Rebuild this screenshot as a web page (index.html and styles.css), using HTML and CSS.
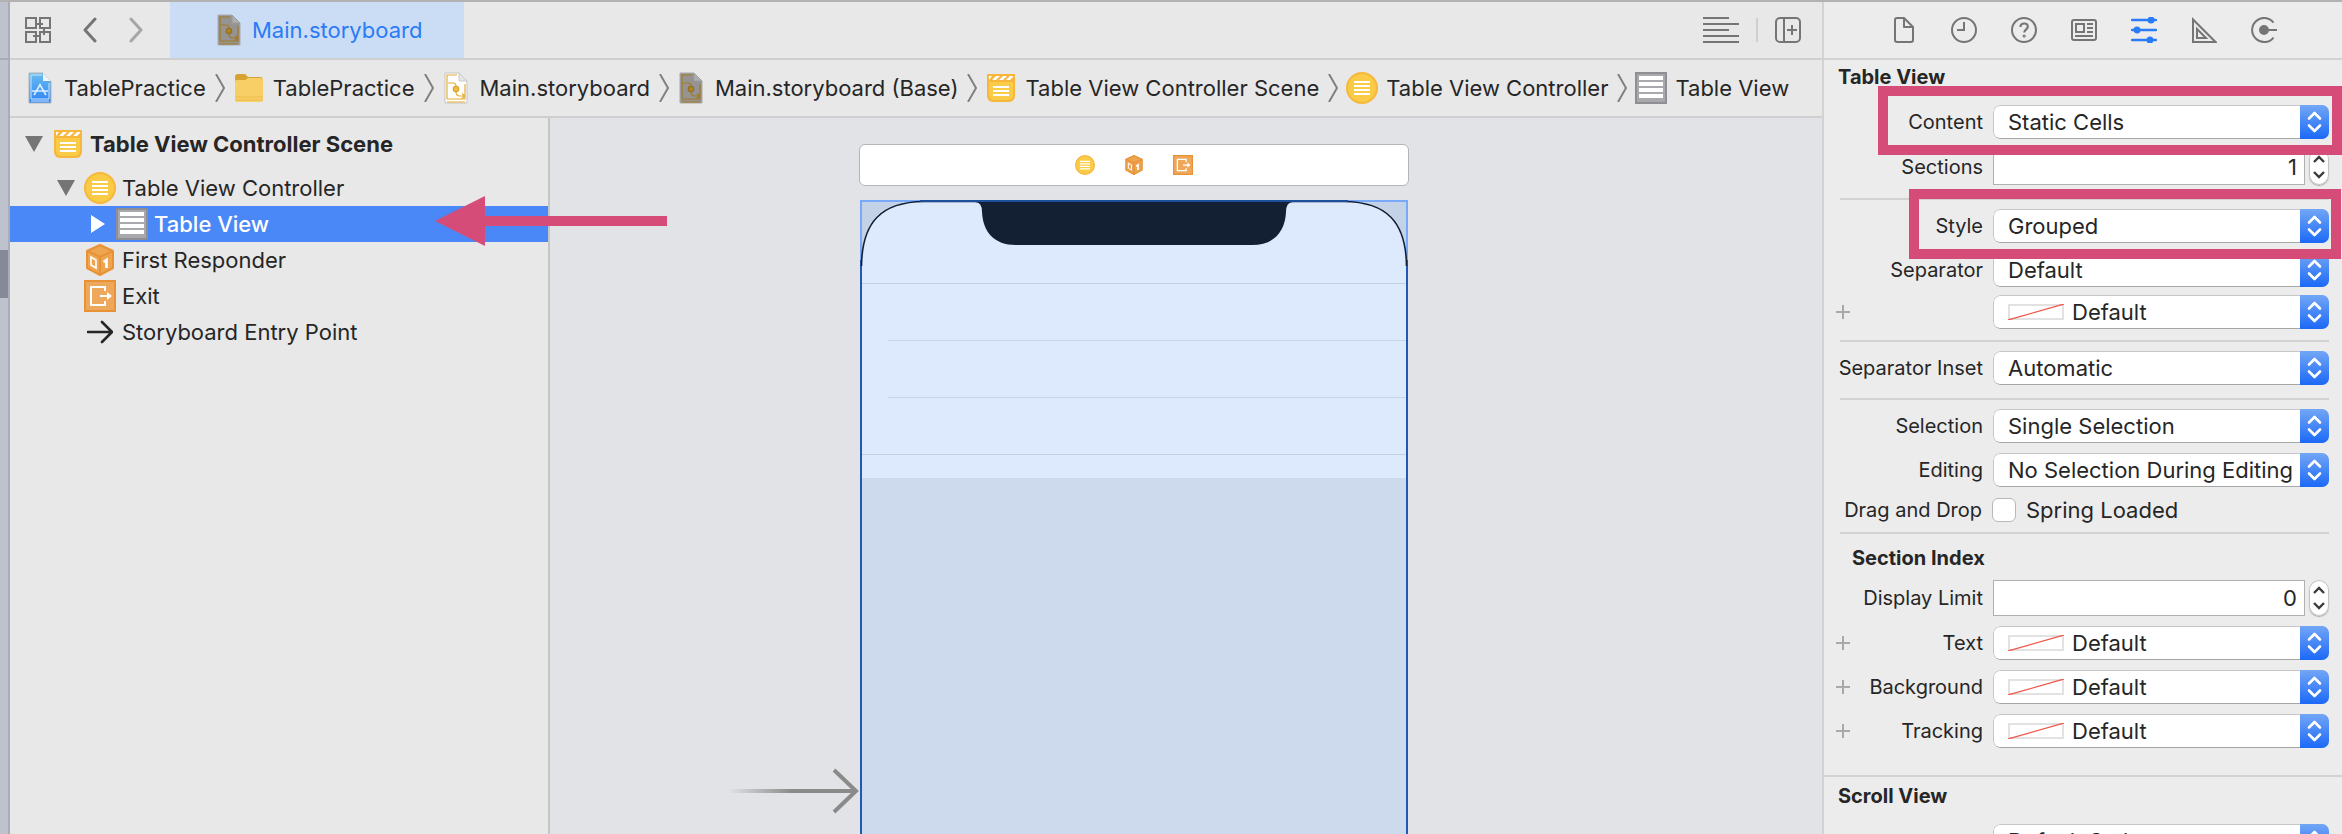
FILE: index.html
```html
<!DOCTYPE html>
<html lang="en">
<head>
<meta charset="utf-8">
<title>Main.storyboard</title>
<link rel="stylesheet" href="styles.css">
</head>
<body>
<svg class="defs" aria-hidden="true">
  <defs>
    <linearGradient id="g-blue" x1="0" y1="0" x2="0" y2="1"><stop offset="0" stop-color="#69bdf0"/><stop offset="1" stop-color="#2f82f3"/></linearGradient>
    <linearGradient id="g-fade" x1="0" y1="0" x2="1" y2="0"><stop offset="0" stop-color="#8a8a8a" stop-opacity="0"/><stop offset=".5" stop-color="#8a8a8a"/></linearGradient>
    <symbol id="i-scene" viewBox="0 0 28 28"><path d="M0 0h28v22a6 6 0 0 1-6 6H6a6 6 0 0 1-6-6z" fill="#f6b73c"/><path d="M2 8h24v13a5 5 0 0 1-5 5H7a5 5 0 0 1-5-5z" fill="#f9cb46"/><path d="M2 2h3L2 6zM9 2h4l-4 4H5zM16 2h4l-4 4h-4zM23 2h3v1l-3 3h-4z" fill="#fff"/><path d="M6 13h16M6 17h16M6 21h16" stroke="#fff" stroke-width="2"/></symbol>
    <symbol id="i-controller" viewBox="0 0 32 32"><circle cx="16" cy="16" r="15" fill="#f9cb46" stroke="#f6b73c" stroke-width="2"/><path d="M8 10h16M8 14h16M8 18h16M8 22h16" stroke="#fff" stroke-width="2"/></symbol>
    <symbol id="i-table" viewBox="0 0 32 32"><path d="M1 1h30v30H1z" fill="#a8a8ad" stroke="#8e8e93" stroke-width="2"/><path d="M4 6h24M4 12h24M4 18h24M4 24h24" stroke="#fff" stroke-width="4"/></symbol>
    <symbol id="i-cube" viewBox="0 0 28 32"><path d="M14 1l13 6v17l-13 7-13-7V7z" fill="#eda552" stroke="#e99235" stroke-width="2" stroke-linejoin="round"/><path d="M1 7l13 6 13-6M14 13v18" fill="none" stroke="#e99235" stroke-width="2"/><path d="M5 13l5 3v8l-5-3z" fill="none" stroke="#fff" stroke-width="1.6"/><path d="M17.500 18l3-2v8" fill="none" stroke="#fff" stroke-width="2.600"/></symbol>
    <symbol id="i-exit" viewBox="0 0 32 32"><path d="M1 1h30v30H1z" fill="#eda85c" stroke="#e99235" stroke-width="2"/><path d="M21 11V7H7v18h14v-4M16 16h10" fill="none" stroke="#fff" stroke-width="2"/><path d="M23 12l5 4-5 4z" fill="#fff"/></symbol>
    <symbol id="i-doc" viewBox="0 0 24 32"><path d="M1 1h14l8 8v22H1z" fill="#fff" stroke="#c4c4c4"/><path d="M15 1v8h8z" fill="#e6e6e6" stroke="#c4c4c4" stroke-width=".8"/><path d="M3 27V3h10M3 27h18V12M3 30h18M4 11h5q3 0 3 3v6q0 4 4 4h4M18 21.500l2.500 2.500-2.500 2.500" fill="none" stroke="#e5ae35" stroke-width="1.200"/><circle cx="12" cy="17" r="2.600" fill="#f0c04a" stroke="#dca42c" stroke-width="1.400"/></symbol>
    <symbol id="i-doc-dim" viewBox="0 0 24 32"><path d="M1 1h14l8 8v22H1z" fill="#959492" stroke="#aaa"/><path d="M15 1v8h8z" fill="#aeaeae" stroke="#9b9b9b" stroke-width=".8"/><path d="M3 27V3h10M3 27h18V12M3 30h18M4 11h5q3 0 3 3v6q0 4 4 4h4M18 21.500l2.500 2.500-2.500 2.500" fill="none" stroke="#a37a25" stroke-width="1.200"/><circle cx="12" cy="17" r="2.600" fill="#b28629" stroke="#95701f" stroke-width="1.400"/></symbol>
    <symbol id="i-project" viewBox="0 0 24 32"><path d="M1 1h14l8 8v22H1z" fill="url(#g-blue)" stroke="#b0b6bd"/><path d="M15 1v8h8z" fill="#eef3f8"/><path d="M3 27V3h11M3 27h18V11M3 29h18" fill="none" stroke="#cfe6fb" stroke-width="1"/><path d="M6 23l6.500-11M18 23l-6.500-11M4 19h16" fill="none" stroke="#d9edff" stroke-width="1.600"/></symbol>
    <symbol id="i-folder" viewBox="0 0 28 30"><path d="M0 4q0-3 3-3h7l3 3h12q3 0 3 3v6H0z" fill="#d7a22f"/><path d="M0 8q0-1 2-1h8l3-2h13q2 0 2 2v19q0 3-2 3H2q-2 0-2-3z" fill="#f7cf66"/><path d="M0 24h28M0 27h28" stroke="#eebb4d" stroke-width="1"/></symbol>
    <symbol id="i-sep" viewBox="0 0 10 28"><path d="M1 0l8 14-8 14" fill="none" stroke="#808080" stroke-width="2"/></symbol>
    <symbol id="i-updown" viewBox="0 0 29 34"><path d="M9 13.500l5.500-5.500 5.500 5.500M9 20.500l5.500 5.500 5.500-5.500" fill="none" stroke="#fff" stroke-width="2.600" stroke-linecap="round" stroke-linejoin="round"/></symbol>
    <symbol id="i-step" viewBox="0 0 20 36"><path d="M5 13l5-5 5 5M5 23l5 5 5-5" fill="none" stroke="#3c3c3c" stroke-width="2.400"/></symbol>
    <symbol id="i-well" viewBox="0 0 56 16"><path d="M1 1h54v14H1z" fill="#fff" stroke="#e2e2e2" stroke-width="2"/><path d="M0 16L56 0" stroke="#ee5b4d" stroke-width="1.300"/></symbol>
    <symbol id="i-plus" viewBox="0 0 14 14"><path d="M7 0v14M0 7h14" stroke="#a9a9a9" stroke-width="2"/></symbol>
  </defs>
</svg>
<div class="window">
  <div class="gutter"><div class="gutter-mark"></div></div>
  <main class="editor">
    <header class="tabbar">
      <nav class="nav">
        <button class="tool" aria-label="Related items"><svg width="26" height="26" viewBox="0 0 26 26" fill="none" stroke="#757575" stroke-width="2"><path d="M1 1h10v10H1zM15 1h10v10H15zM1 15h10v10H1zM15 15h10v10H15zM11 7h7M19 11v7M8 19h7"/></svg></button>
        <button class="tool" aria-label="Back"><svg width="14" height="26" viewBox="0 0 14 26" fill="none" stroke="#757575" stroke-width="3" stroke-linecap="round" stroke-linejoin="round"><path d="M12 2L2 13l10 11"/></svg></button>
        <button class="tool" aria-label="Forward"><svg width="14" height="26" viewBox="0 0 14 26" fill="none" stroke="#a6a6a6" stroke-width="3" stroke-linecap="round" stroke-linejoin="round"><path d="M2 2l10 11L2 24"/></svg></button>
      </nav>
      <button class="tab"><svg width="24" height="32"><use href="#i-doc-dim"/></svg>Main.storyboard</button>
      <div class="tab-tools">
        <button class="tool" aria-label="Editor options"><svg width="36" height="30" viewBox="0 0 36 30" fill="none" stroke="#757575" stroke-width="2"><path d="M0 3h26M0 9h36M0 15h26M0 21h36M0 27h36"/></svg></button>
        <span class="divider"></span>
        <button class="tool" aria-label="Add editor"><svg width="26" height="26" viewBox="0 0 26 26" fill="none" stroke="#757575" stroke-width="2"><rect x="1" y="1" width="24" height="24" rx="4"/><path d="M9 1v24M12 13h10M17 8v10"/></svg></button>
      </div>
    </header>
    <nav class="jumpbar">
      <a class="crumb" href="#"><svg width="24" height="32"><use href="#i-project"/></svg>TablePractice</a>
      <svg class="sep" width="10" height="28"><use href="#i-sep"/></svg>
      <a class="crumb snug" href="#"><svg width="28" height="30"><use href="#i-folder"/></svg>TablePractice</a>
      <svg class="sep" width="10" height="28"><use href="#i-sep"/></svg>
      <a class="crumb" href="#"><svg width="24" height="32"><use href="#i-doc"/></svg>Main.storyboard</a>
      <svg class="sep" width="10" height="28"><use href="#i-sep"/></svg>
      <a class="crumb" href="#"><svg width="24" height="32"><use href="#i-doc-dim"/></svg>Main.storyboard (Base)</a>
      <svg class="sep" width="10" height="28"><use href="#i-sep"/></svg>
      <a class="crumb snug" href="#"><svg width="28" height="28"><use href="#i-scene"/></svg>Table View Controller Scene</a>
      <svg class="sep" width="10" height="28"><use href="#i-sep"/></svg>
      <a class="crumb tight" href="#"><svg width="32" height="32"><use href="#i-controller"/></svg>Table View Controller</a>
      <svg class="sep" width="10" height="28"><use href="#i-sep"/></svg>
      <a class="crumb tight" href="#"><svg width="32" height="32"><use href="#i-table"/></svg>Table View</a>
    </nav>
    <div class="work">
      <aside class="outline">
        <ul class="tree">
          <li class="row scene"><svg class="tri" width="18" height="16"><path d="M0 0h18L9 16z" fill="#757575"/></svg><span class="ico"><svg width="28" height="28"><use href="#i-scene"/></svg></span>Table View Controller Scene</li>
          <li class="row level1"><svg class="tri" width="18" height="16"><path d="M0 0h18L9 16z" fill="#757575"/></svg><span class="ico"><svg width="32" height="32"><use href="#i-controller"/></svg></span>Table View Controller</li>
          <li class="row level2 selected"><svg class="tri" width="18" height="18"><path d="M2 0v18l14-9z" fill="#fff"/></svg><span class="ico"><svg width="32" height="32"><use href="#i-table"/></svg></span>Table View</li>
          <li class="row leaf"><span class="ico"><svg width="28" height="32"><use href="#i-cube"/></svg></span>First Responder</li>
          <li class="row leaf"><span class="ico"><svg width="32" height="32"><use href="#i-exit"/></svg></span>Exit</li>
          <li class="row leaf"><span class="ico"><svg width="26" height="24" fill="none" stroke="#262626" stroke-width="2.600" stroke-linecap="round" stroke-linejoin="round"><path d="M1 12h23M15 2l10 10-10 10"/></svg></span>Storyboard Entry Point</li>
        </ul>
      </aside>
      <section class="canvas">
        <div class="scene-dock">
          <svg width="20" height="20"><use href="#i-controller"/></svg>
          <svg width="20" height="20"><use href="#i-cube"/></svg>
          <svg width="20" height="20"><use href="#i-exit"/></svg>
        </div>
        <div class="device">
          <div class="cells">
            <div class="header-gap"></div>
            <div class="cell"></div>
            <div class="cell"></div>
            <div class="cell"></div>
            <div class="footer-gap"></div>
          </div>
          <svg class="bezel" width="548" height="90" viewBox="0 0 548 90">
            <path d="M2 2h56C20 3 3 20 2 60zM546 2h-56c38 1 55 18 56 58z" fill="#c4d2e8"/>
            <path d="M1 60V1h59M488 1h59v59" fill="none" stroke="#77a9f8" stroke-width="2"/>
            <path d="M1.500 66C2 22 21 2 64 1.500h420c43 .5 62 20.500 62.500 64.500" fill="none" stroke="#132033" stroke-width="1.600"/>
            <path d="M60 1h428" stroke="#1d4f9a" stroke-width="2"/>
            <path d="M115 2q7 0 7 10c1 20 12 33 34 33h236c22 0 33-13 34-33q0-10 7-10z" fill="#132033"/>
          </svg>
        </div>
        <svg class="entry" width="132" height="48" viewBox="0 0 132 48"><rect x="0" y="22" width="128" height="4" fill="url(#g-fade)"/><path d="M106 3l22 21-22 21" fill="none" stroke="#8a8a8a" stroke-width="4"/></svg>
      </section>
      <svg class="pointer" width="232" height="50" viewBox="0 0 232 50"><path d="M0 25L50 0v20h182v10H50v20z" fill="#d54c79"/></svg>
    </div>
  </main>
  <aside class="inspector">
    <nav class="inspector-tabs">
      <button class="tool" aria-label="File"><svg width="26" height="26" viewBox="0 0 26 26" fill="none" stroke="#757575" stroke-width="2" stroke-linejoin="round"><path d="M6 1h7l9 9v13q0 2-2 2H6q-2 0-2-2V3q0-2 2-2zM13 1v9h9"/></svg></button>
      <button class="tool" aria-label="History"><svg width="26" height="26" viewBox="0 0 26 26" fill="none" stroke="#757575" stroke-width="2"><circle cx="13" cy="13" r="12"/><path d="M13 5v8H6"/></svg></button>
      <button class="tool" aria-label="Quick Help"><svg width="26" height="26" viewBox="0 0 26 26" fill="none" stroke="#757575" stroke-width="2"><circle cx="13" cy="13" r="12"/><path d="M9.500 10q0-3.500 3.700-3.500t3.600 3.200c0 2.800-3.500 2.600-3.500 5.800" stroke-width="2.200"/><circle cx="13.200" cy="19" r=".6"/></svg></button>
      <button class="tool" aria-label="Identity"><svg width="26" height="26" viewBox="0 0 26 26" fill="none" stroke="#757575" stroke-width="2"><rect x="1" y="3" width="24" height="20" rx="2"/><path d="M5 7h8v8H5zM16 7h6M16 11h6M16 15h6M4 19h18"/></svg></button>
      <button class="tool" aria-label="Attributes"><svg width="26" height="26" viewBox="0 0 26 26" fill="#2a7bf6" stroke="#2a7bf6" stroke-width="2.400" stroke-linecap="round"><path d="M1 3h24M1 13h24M1 23h24"/><circle cx="20" cy="3" r="2.300"/><circle cx="6" cy="13" r="2.300"/><circle cx="19" cy="23" r="2.300"/></svg></button>
      <button class="tool" aria-label="Size"><svg width="26" height="26" viewBox="0 0 26 26" fill="none" stroke="#757575" stroke-width="2"><path d="M2 2.500V25h22.500zM6 12v9h9z"/></svg></button>
      <button class="tool" aria-label="Connections"><svg width="26" height="26" viewBox="0 0 26 26" fill="none" stroke="#757575" stroke-width="2"><path d="M22.500 5.500a12 12 0 1 0 0 15M13 13h13"/><circle cx="13" cy="13" r="4" fill="#757575"/></svg></button>
    </nav>
    <form class="attrs">
      <h2 class="title">Table View</h2>
      <div class="field marked mark-wide"><label for="content">Content</label><span class="popup"><select id="content"><option>Static Cells</option></select><svg class="cap" width="29" height="34"><use href="#i-updown"/></svg></span></div>
      <div class="field number"><label for="sections">Sections</label><input id="sections" type="text" value="1"><button type="button" class="stepper" aria-label="Change sections"><svg width="20" height="36"><use href="#i-step"/></svg></button></div>
      <hr>
      <div class="field marked mark-narrow"><label for="style">Style</label><span class="popup"><select id="style"><option>Grouped</option></select><svg class="cap" width="29" height="34"><use href="#i-updown"/></svg></span></div>
      <div class="field"><label for="separator">Separator</label><span class="popup"><select id="separator"><option>Default</option></select><svg class="cap" width="29" height="34"><use href="#i-updown"/></svg></span></div>
      <div class="field close"><button type="button" class="add" aria-label="Add separator variation"><svg width="14" height="14"><use href="#i-plus"/></svg></button><span class="popup color"><select aria-label="Separator color"><option>Default</option></select><svg class="well" width="56" height="16"><use href="#i-well"/></svg><svg class="cap" width="29" height="34"><use href="#i-updown"/></svg></span></div>
      <hr>
      <div class="field"><label for="inset">Separator Inset</label><span class="popup"><select id="inset"><option>Automatic</option></select><svg class="cap" width="29" height="34"><use href="#i-updown"/></svg></span></div>
      <hr>
      <div class="field"><label for="selection">Selection</label><span class="popup"><select id="selection"><option>Single Selection</option></select><svg class="cap" width="29" height="34"><use href="#i-updown"/></svg></span></div>
      <div class="field"><label for="editing">Editing</label><span class="popup"><select id="editing"><option>No Selection During Editing</option></select><svg class="cap" width="29" height="34"><use href="#i-updown"/></svg></span></div>
      <div class="field check"><span class="name">Drag and Drop</span><label class="box"><input type="checkbox">Spring Loaded</label></div>
      <hr>
      <h3 class="subtitle">Section Index</h3>
      <div class="field number"><label for="limit">Display Limit</label><input id="limit" type="text" value="0"><button type="button" class="stepper" aria-label="Change display limit"><svg width="20" height="36"><use href="#i-step"/></svg></button></div>
      <div class="field"><button type="button" class="add" aria-label="Add text variation"><svg width="14" height="14"><use href="#i-plus"/></svg></button><label for="text">Text</label><span class="popup color"><select id="text"><option>Default</option></select><svg class="well" width="56" height="16"><use href="#i-well"/></svg><svg class="cap" width="29" height="34"><use href="#i-updown"/></svg></span></div>
      <div class="field"><button type="button" class="add" aria-label="Add background variation"><svg width="14" height="14"><use href="#i-plus"/></svg></button><label for="bg">Background</label><span class="popup color"><select id="bg"><option>Default</option></select><svg class="well" width="56" height="16"><use href="#i-well"/></svg><svg class="cap" width="29" height="34"><use href="#i-updown"/></svg></span></div>
      <div class="field"><button type="button" class="add" aria-label="Add tracking variation"><svg width="14" height="14"><use href="#i-plus"/></svg></button><label for="tracking">Tracking</label><span class="popup color"><select id="tracking"><option>Default</option></select><svg class="well" width="56" height="16"><use href="#i-well"/></svg><svg class="cap" width="29" height="34"><use href="#i-updown"/></svg></span></div>
      <div class="section-end"></div>
      <h2 class="title">Scroll View</h2>
      <div class="field lead"><span class="popup"><select aria-label="Indicators"><option>Default Style</option></select><svg class="cap" width="29" height="34"><use href="#i-updown"/></svg></span></div>
    </form>
  </aside>
</div>
</body>
</html>
```

FILE: styles.css
```css
*, *::after { box-sizing: border-box; }
body {
  margin: 0;
  height: 100vh;
  overflow: hidden;
  background: #e8e8e8;
  color: #262626;
  font: 22px/28px Inter, "Liberation Sans", sans-serif;
}
svg { display: block; flex: none; }
button, input, select { font: inherit; color: inherit; margin: 0; }
button { border: 0; padding: 0; background: none; }
a { color: inherit; text-decoration: none; }
.defs { position: absolute; width: 0; height: 0; }

.window { display: flex; height: 100vh; overflow: hidden; border-top: 2px solid #b2b2b2; }
.gutter { flex: none; width: 10px; padding-top: 56px; background: #bec2cc; border-right: 2px solid #a9adb8; }
.gutter-mark { border-top: 2px solid #a9adb8; height: 240px; border-bottom: 48px solid #858999; }
.editor { flex: 1; min-width: 0; display: flex; flex-direction: column; }

.tabbar { display: flex; height: 58px; flex: none; border-bottom: 2px solid #cfcfcf; }
.nav { display: flex; align-items: center; gap: 32px; width: 160px; padding-left: 15px; }
.tool { display: flex; align-items: center; justify-content: center; }
.tab { display: flex; align-items: center; gap: 11px; width: 294px; padding-left: 47px; background: #cbddf4; color: #2a7bf6; }
.tab-tools { display: flex; align-items: center; gap: 17px; margin-left: auto; padding-right: 21px; }
.divider { width: 2px; height: 24px; background: #cfcfcf; }

.jumpbar { display: flex; align-items: center; flex: none; height: 58px; padding-left: 18px; border-bottom: 2px solid #cfcfcf; white-space: nowrap; }
.crumb { display: flex; align-items: center; gap: 12px; }
.crumb.snug { gap: 10px; }
.crumb.tight { gap: 8px; margin-left: -2px; }
.sep { margin: 0 10px 0 9px; }

.work { position: relative; display: flex; flex: 1; min-height: 0; }
.outline { flex: none; width: 540px; border-right: 2px solid #c6c6c6; }
.tree { list-style: none; margin: 0; padding: 0; }
.row { display: flex; align-items: center; height: 36px; white-space: nowrap; }
.tri { margin-right: 6px; }
.ico { display: flex; justify-content: center; width: 38px; margin-right: 3px; }
.scene { height: 52px; padding-left: 15px; font-weight: 700; }
.level1 { padding-left: 47px; }
.level2 { padding-left: 79px; }
.leaf { padding-left: 71px; }
.selected { background: #4b88f7; color: #fff; font-weight: 500; }

.canvas { position: relative; flex: 1; overflow: hidden; background: #e2e3e6; }
.scene-dock { position: absolute; left: 309px; top: 26px; width: 550px; height: 42px; display: flex; align-items: center; justify-content: center; gap: 29px; background: #fff; border: 1px solid #b5b5b7; border-radius: 6px; }
.device { position: absolute; left: 310px; top: 82px; bottom: 0; width: 548px; background: #cddaed; border: solid #2059b3; border-width: 0 2px; }
.cells { background: #ddeafe; }
.header-gap { height: 84px; border-bottom: 1px solid #c0cde2; }
.cell { height: 57px; margin-left: 26px; border-bottom: 1px solid #c8d4e7; }
.cell:nth-child(4) { margin-left: 0; border-color: #c0cde2; }
.footer-gap { height: 23px; }
.bezel { position: absolute; left: -2px; top: 0; }
.entry { position: absolute; left: 178px; top: 649px; }
.pointer { position: absolute; left: 425px; top: 78px; }

.inspector { flex: none; width: 520px; background: #ececec; border-left: 2px solid #d2d2d2; }
.inspector-tabs { display: flex; justify-content: center; gap: 34px; height: 58px; padding-left: 2px; border-bottom: 2px solid #d2d2d2; }
.attrs { padding-right: 13px; }
.title { margin: 0; padding-left: 14px; font-size: 20px; line-height: 34px; font-weight: 700; }
.subtitle { margin: 10px 0 8px; padding-left: 28px; font-size: 20px; line-height: 28px; font-weight: 700; }
.attrs hr { margin: 13px 0 9px 16px; border: 0; height: 2px; background: #d2d2d2; }
.attrs .close + hr { margin-top: 11px; }
.attrs .check + hr { margin-top: 9px; }
.field { position: relative; display: flex; align-items: center; justify-content: flex-end; gap: 10px; height: 34px; margin-top: 10px; font-size: 20px; white-space: nowrap; }
hr + .field { margin-top: 0; }
.field.close, .subtitle + .field { margin-top: 8px; }
.field.number { height: 36px; }
.add { margin-left: 12px; margin-right: auto; }
.popup { display: grid; width: 336px; height: 34px; font-size: 22px; border-radius: 7px; overflow: hidden; background: #fff; }
.popup > * { grid-area: 1 / 1; }
.popup select { appearance: none; width: 100%; height: 34px; padding: 0 0 0 14px; border: 1px solid #c6c6c6; border-bottom-color: #a6a6a6; border-radius: 7px; background: none; outline: 0; }
.popup.color select { padding-left: 78px; }
.cap { justify-self: end; pointer-events: none; background: linear-gradient(#72a6f6, #1c69f6); }
.well { align-self: center; margin-left: 15px; pointer-events: none; }
.number input { width: 312px; height: 36px; padding: 0 7px; border: 1px solid #b0b0b0; background: #fff; text-align: right; font-size: 22px; outline: 0; }
.stepper { margin-left: -6px; border-radius: 10px; background: #fff; box-shadow: inset 0 0 0 1px #c4c4c4, 0 1px 1px #aaa; }
.check { height: 26px; }
.box { display: flex; align-items: center; gap: 10px; width: 337px; font-size: 22px; }
.box input { appearance: none; width: 24px; height: 24px; border: 1px solid #b8b8b8; border-radius: 6px; background: #fff; }
.section-end { height: 2px; margin: 27px -13px 2px 0; background: #d2d2d2; }

.marked::after { content: ""; position: absolute; z-index: 1; top: -19px; height: 69px; border: 10px solid #d54c79; pointer-events: none; }
.mark-wide, .field.lead { margin-top: 11px; }
.mark-wide::after { left: 54px; right: -13px; }
.mark-narrow::after { left: 85px; right: -12px; height: 70px; top: -20px; }
```
